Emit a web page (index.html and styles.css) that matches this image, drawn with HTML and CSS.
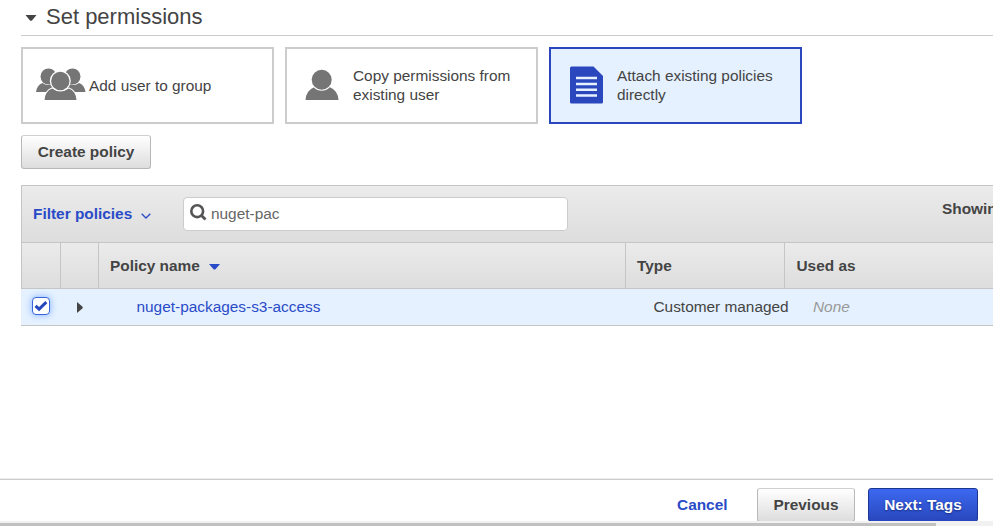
FILE: index.html
```html
<!DOCTYPE html>
<html lang="en">
<head>
<meta charset="utf-8">
<title>Set permissions</title>
<link rel="stylesheet" href="styles.css">
</head>
<body>
<main class="content">
  <h1 class="section-title">
    <svg class="caret" width="12" height="6" viewBox="0 0 12 6"><path d="M.5 0h11L7.200 5.200q-1.200 1-2.400 0z" fill="#444"/></svg>
    <span>Set permissions</span>
  </h1>
  <div class="options">
    <div class="option option-group">
      <svg width="50" height="33" viewBox="0 0 50 33" fill="#757575">
        <circle cx="12.500" cy="8.500" r="8"/><circle cx="36.500" cy="8.500" r="8"/>
        <path d="M0 24q1-7 6.500-9 5 4 11 0v9zM49.500 24q-1-7-6.500-9-5 4-11 0v9z"/>
        <path d="M8.500 32q.5-8.500 7.500-11.500 8.500 5 17 0 7 3 7.500 11.500z" stroke="#fff" stroke-width="2" paint-order="stroke"/>
        <circle cx="24.300" cy="13" r="9.200" stroke="#fff" stroke-width="2.600" paint-order="stroke"/>
      </svg>
      <span>Add user to group</span>
    </div>
    <div class="option">
      <svg width="34" height="32" viewBox="0 0 34 32" fill="#757575">
        <path d="M.5 31q.5-9.500 9-13 7 5 15 0 8.500 3.500 9 13z"/>
        <circle cx="16.700" cy="10.700" r="10" stroke="#fff" stroke-width="2" paint-order="stroke"/>
      </svg>
      <span>Copy permissions from existing user</span>
    </div>
    <div class="option selected">
      <svg width="34" height="38" viewBox="0 0 34 38">
        <path d="M2.500.500h22L34 10v26q0 1.500-1.500 1.500h-30Q1 37.500 1 36V2Q1 .5 2.500.500z" fill="#2a47bd"/>
        <path d="M7 12h21M7 18h21M7 23.800h21M7 29.600h21" stroke="#e5f1ff" stroke-width="2.500"/>
      </svg>
      <span>Attach existing policies directly</span>
    </div>
  </div>
  <button class="btn create">Create policy</button>

  <section class="panel">
    <div class="toolbar">
      <span class="filter">Filter policies</span>
      <svg class="chevron" width="10" height="6" viewBox="0 0 10 6"><path d="M.7.700 5 5 9.300.700" fill="none" stroke="#2a4bc8" stroke-width="1.300"/></svg>
      <div class="search">
        <svg width="17" height="17" viewBox="0 0 17 17" fill="none" stroke="#555"><circle cx="7.200" cy="7.200" r="5.900" stroke-width="2.600"/><path d="m11.500 11.500 4 4" stroke-width="2.800"/></svg>
        <span>nuget-pac</span>
      </div>
      <span class="showing">Showing</span>
    </div>
    <div class="grid head">
      <div></div><div></div>
      <div class="name">Policy name<svg width="11" height="6" viewBox="0 0 11 6"><path d="M0 0h11L6.500 5.200q-1 .8-2 0z" fill="#2a4bc8"/></svg></div>
      <div>Type</div><div class="used-head">Used as</div>
    </div>
    <div class="grid row">
      <div class="check-cell"><span class="check"><svg width="14" height="12" viewBox="0 0 14 12"><path d="m1.500 5.800 3.600 3.400 7.200-7" fill="none" stroke="#2747bc" stroke-width="3"/></svg></span></div>
      <div class="expand"><svg width="6" height="11" viewBox="0 0 6 11"><path d="M0 0v11l5.300-4.500q.8-1 0-2z" fill="#444"/></svg></div>
      <div class="policy">nuget-packages-s3-access</div>
      <div class="type">Customer managed</div>
      <div class="used">None</div>
    </div>
  </section>
</main>
<footer class="actions">
  <span class="cancel">Cancel</span>
  <button class="btn previous">Previous</button>
  <button class="btn primary">Next: Tags</button>
</footer>
<div class="scrollbar"><div class="thumb"></div></div>
</body>
</html>
```
FILE: styles.css
```css
* { box-sizing: border-box; }
body {
  margin: 0;
  height: 526px;
  overflow: hidden;
  display: flex;
  flex-direction: column;
  background: #fff;
  color: #444;
  font: 15.4px/19px "Liberation Sans", Arial, sans-serif;
}
.content { flex: 1; padding-left: 21px; overflow: hidden; }
.section-title {
  display: flex;
  align-items: center;
  height: 36px;
  margin: 0;
  padding: 0 0 1px 4px;
  border-bottom: 1px solid #ccc;
  font-size: 22px;
  line-height: 26px;
  font-weight: 400;
}
.section-title span { padding-bottom: 1px; }
.caret { margin: 1px 9px 0 0; }
.options { display: flex; gap: 11px; padding-top: 11px; }
.option {
  display: flex;
  align-items: center;
  width: 253px;
  height: 77px;
  padding: 0 18px 2px;
  gap: 14px;
  border: 2px solid #ccc;
}
.option svg { flex: none; }
.option-group { padding: 0 0 0 13px; gap: 3px; }
.option-group svg { margin-top: -3px; }
.selected { border-color: #2a47bd; background: #e5f1ff; }
.btn {
  height: 34px;
  padding: 0 0 2px;
  border: 1px solid #b8b8b8;
  border-top-color: #d0d0d0;
  border-radius: 3px;
  background: linear-gradient(#fff, #ddd);
  color: #444;
  font: bold 15.4px/19px "Liberation Sans", Arial, sans-serif;
}
.create { display: block; width: 130px; margin-top: 11px; }
.panel { width: 1100px; margin-top: 16px; border: solid #c5c5c5; border-width: 1px 0 0; }
.toolbar {
  display: flex;
  align-items: center;
  height: 56px;
  padding-left: 11px;
  border-left: 1px solid #c5c5c5;
  background: linear-gradient(#ebebeb, #ddd);
  font-weight: 700;
}
.filter, .cancel { color: #2a4bc8; }
.filter { width: 99px; padding-bottom: 1px; white-space: nowrap; }
.chevron { margin: 3px 0 0 9px; }
.search {
  display: flex;
  align-items: center;
  width: 385px;
  height: 34px;
  margin-left: 32px;
  padding-left: 6px;
  gap: 4px;
  border: 1px solid #ccc;
  border-radius: 4px;
  background: #fff;
  color: #666;
  font-weight: 400;
}
.search svg { margin-top: -3px; }
.search span { padding-bottom: 1px; }
.showing { margin: 0 0 11px 374px; white-space: nowrap; }
.grid { display: grid; grid-template-columns: 39px 38px 527px 159px 1fr; }
.head {
  height: 47px;
  border: solid #c5c5c5;
  border-width: 1px 0;
  background: linear-gradient(#ebebeb, #ddd);
  font-weight: 700;
}
.head > div { display: flex; align-items: center; padding-left: 11px; border-left: 1px solid #c5c5c5; }
.head > .used-head { padding-left: 11.5px; }
.name svg { margin: 3px 0 0 9px; }
.row { height: 37px; padding-bottom: 1px; border-bottom: 1px solid #c5c5c5; background: #e5f1ff; align-items: center; }
.check-cell { padding-left: 11px; }
.check {
  display: flex;
  align-items: center;
  justify-content: center;
  width: 18px;
  height: 18px;
  margin-top: -1px;
  border: 1px solid #3865dc;
  border-radius: 4px;
  background: #fff;
  box-shadow: 0 0 7px #7eafff;
}
.expand { display: flex; padding: 2px 0 0 17px; }
.policy { padding-left: 38.5px; color: #2a4bc8; }
.type { padding-left: 28.5px; white-space: nowrap; }
.used { padding-left: 29px; color: #999; font-style: italic; }
.actions {
  display: flex;
  flex: none;
  align-items: flex-start;
  justify-content: flex-end;
  height: 42px;
  padding: 8px 15px 0 0;
  border-top: 1px solid #ccc;
  box-shadow: 0 -1px #eee;
}
.cancel { margin: 7px 29.500px 0 0; font-weight: 700; }
.previous { width: 98px; margin-right: 13px; }
.primary { width: 110px; border-color: #1d3693; background: linear-gradient(#3c69f0, #2947bd); color: #fff; text-shadow: 0 1px 2px #142b7c; }
.scrollbar { position: relative; flex: none; height: 5px; padding-top: 2px; background: #f1f1f1; }
.thumb { width: 936px; height: 3px; background: #c1c1c1; }
```
